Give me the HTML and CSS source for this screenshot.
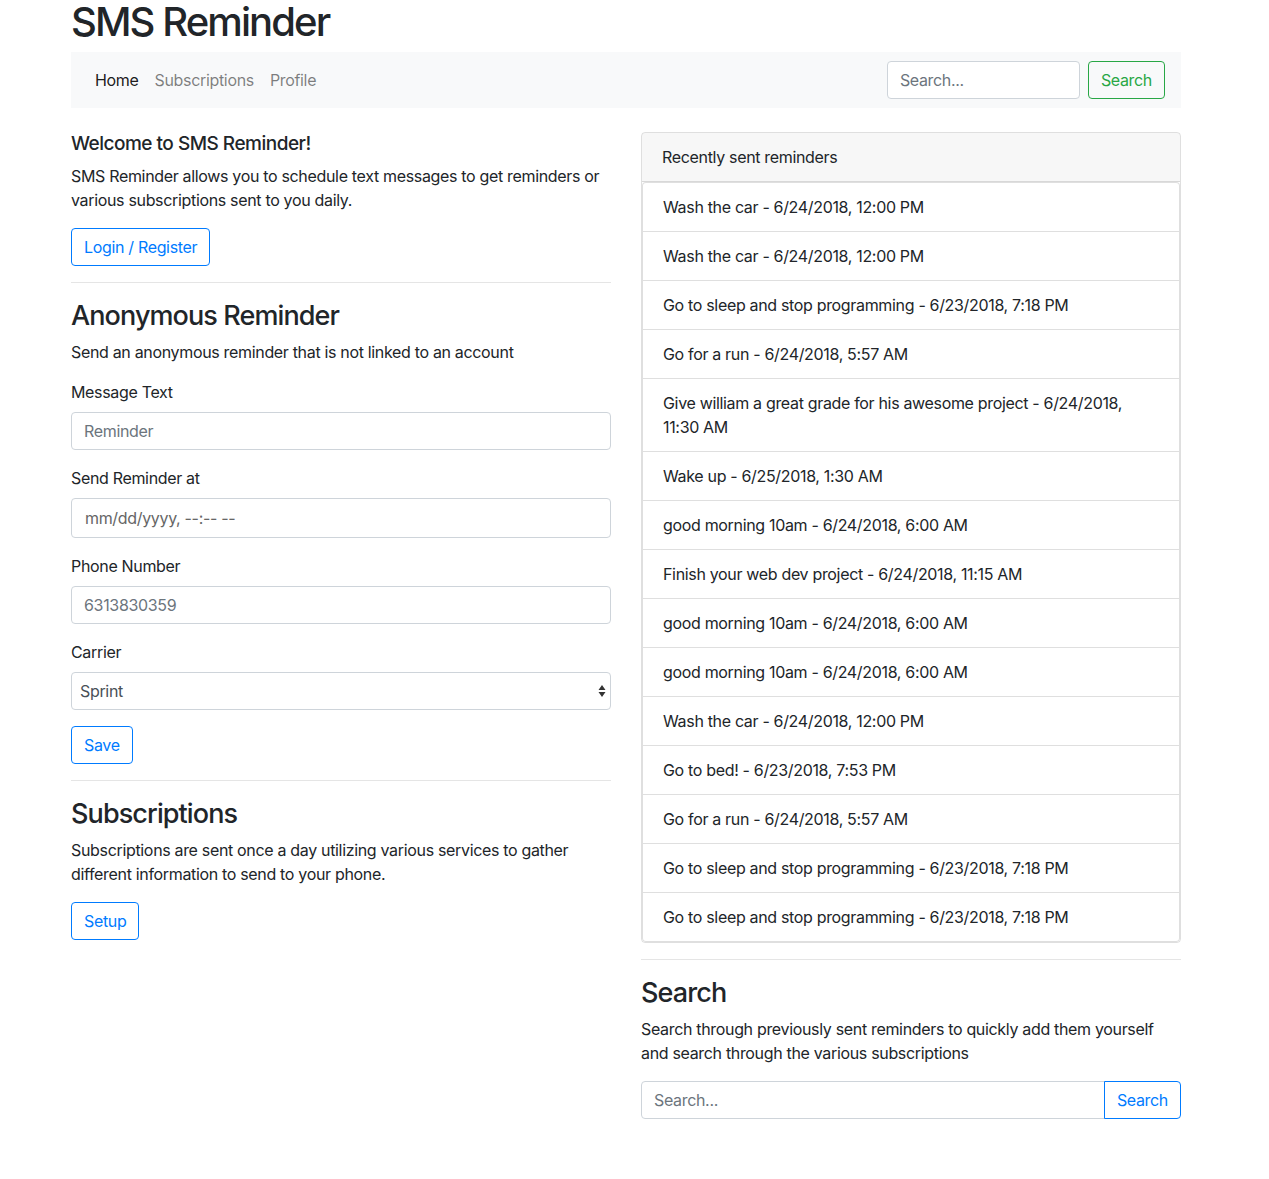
FILE: index.html
```html
<!DOCTYPE html>
<html>
<head>
<meta charset="utf-8">
<title>SMS Reminder</title>
<link rel="stylesheet" href="styles.css">
</head>
<body>
<div class="container">
  <h1 class="title">SMS Reminder</h1>
  <nav class="navbar">
    <ul class="nav">
      <li><a class="nav-link active">Home</a></li>
      <li><a class="nav-link">Subscriptions</a></li>
      <li><a class="nav-link">Profile</a></li>
    </ul>
    <form class="nav-search">
      <input class="form-control nav-input" type="text" placeholder="Search...">
      <button type="button" class="btn btn-success">Search</button>
    </form>
  </nav>

  <div class="row">
    <div class="col">
      <h5 class="h5">Welcome to SMS Reminder!</h5>
      <p>SMS Reminder allows you to schedule text messages to get reminders or various subscriptions sent to you daily.</p>
      <button type="button" class="btn btn-primary">Login / Register</button>
      <hr>
      <h3 class="h3">Anonymous Reminder</h3>
      <p>Send an anonymous reminder that is not linked to an account</p>
      <form>
        <div class="form-group">
          <label>Message Text</label>
          <input class="form-control" type="text" placeholder="Reminder">
        </div>
        <div class="form-group">
          <label>Send Reminder at</label>
          <input class="form-control date" type="text" placeholder="mm/dd/yyyy, --:-- --">
        </div>
        <div class="form-group">
          <label>Phone Number</label>
          <input class="form-control" type="text" placeholder="6313830359">
        </div>
        <div class="form-group">
          <label>Carrier</label>
          <div class="select-wrap">
            <select class="form-control select">
              <option>Sprint</option>
              <option>Verizon</option>
              <option>AT&amp;T</option>
              <option>T-Mobile</option>
            </select>
            <svg class="select-arrow" width="8" height="14" viewBox="0 0 8 14"><path d="M4 1 L7.5 6 L0.5 6 Z M4 13 L7.5 8 L0.5 8 Z" fill="#333"/></svg>
          </div>
        </div>
        <button type="button" class="btn btn-primary">Save</button>
      </form>
      <hr>
      <h3 class="h3">Subscriptions</h3>
      <p>Subscriptions are sent once a day utilizing various services to gather different information to send to your phone.</p>
      <button type="button" class="btn btn-primary">Setup</button>
    </div>

    <div class="col">
      <div class="card">
        <div class="card-header">Recently sent reminders</div>
        <ul class="list-group">
          <li class="list-group-item">Wash the car - 6/24/2018, 12:00 PM</li>
          <li class="list-group-item">Wash the car - 6/24/2018, 12:00 PM</li>
          <li class="list-group-item">Go to sleep and stop programming - 6/23/2018, 7:18 PM</li>
          <li class="list-group-item">Go for a run - 6/24/2018, 5:57 AM</li>
          <li class="list-group-item">Give william a great grade for his awesome project - 6/24/2018, 11:30 AM</li>
          <li class="list-group-item">Wake up - 6/25/2018, 1:30 AM</li>
          <li class="list-group-item">good morning 10am - 6/24/2018, 6:00 AM</li>
          <li class="list-group-item">Finish your web dev project - 6/24/2018, 11:15 AM</li>
          <li class="list-group-item">good morning 10am - 6/24/2018, 6:00 AM</li>
          <li class="list-group-item">good morning 10am - 6/24/2018, 6:00 AM</li>
          <li class="list-group-item">Wash the car - 6/24/2018, 12:00 PM</li>
          <li class="list-group-item">Go to bed! - 6/23/2018, 7:53 PM</li>
          <li class="list-group-item">Go for a run - 6/24/2018, 5:57 AM</li>
          <li class="list-group-item">Go to sleep and stop programming - 6/23/2018, 7:18 PM</li>
          <li class="list-group-item">Go to sleep and stop programming - 6/23/2018, 7:18 PM</li>
        </ul>
      </div>
      <hr>
      <h3 class="h3">Search</h3>
      <p>Search through previously sent reminders to quickly add them yourself and search through the various subscriptions</p>
      <div class="input-group">
        <input class="form-control ig-input" type="text" placeholder="Search...">
        <button type="button" class="btn btn-primary ig-btn">Search</button>
      </div>
    </div>
  </div>
</div>
</body>
</html>
```

FILE: styles.css
```css
* { box-sizing: border-box; }
html, body { margin: 0; padding: 0; }
body {
  font-family: Inter, Roboto, "Helvetica Neue", Arial, sans-serif;
  font-size: 16px;
  line-height: 1.5;
  letter-spacing: -0.33px;
  color: #212529;
  background: #fff;
}
.container {
  width: 1110px;
  margin-left: 71px;
}
.title {
  font-size: 40px;
  font-weight: 500;
  line-height: 44px;
  letter-spacing: -1.9px;
  margin: 0 0 8px;
}
.navbar {
  background: #f8f9fa;
  height: 56px;
  padding: 8px 16px;
  display: flex;
  align-items: center;
  justify-content: space-between;
}
.nav { list-style: none; margin: 0; padding: 0; display: flex; }
.nav-link {
  display: block;
  padding: 8px;
  color: rgba(0,0,0,.5);
}
.nav-link.active { color: rgba(0,0,0,.9); }
.nav-search { display: flex; margin: 0; }
.form-control {
  display: block;
  width: 100%;
  height: 38px;
  padding: 6px 12px;
  font-family: inherit;
  font-size: 16px;
  line-height: 1.5;
  letter-spacing: inherit;
  color: #495057;
  background: #fff;
  border: 1px solid #ced4da;
  border-radius: 4px;
  outline: none;
}
.form-control::placeholder { color: #6c757d; opacity: 1; }
.nav-search .nav-input { width: 193px; margin-right: 8px; }
.form-control.date { height: 40px; padding-left: 13px; }
.form-control.date::placeholder { color: #666; }
.btn {
  display: inline-block;
  height: 38px;
  padding: 6px 12px;
  font-family: inherit;
  font-size: 16px;
  line-height: 1.5;
  letter-spacing: inherit;
  background: transparent;
  border: 1px solid;
  border-radius: 4px;
  cursor: pointer;
}
.btn-primary { color: #007bff; border-color: #007bff; }
.btn-success { color: #28a745; border-color: #28a745; }
.row {
  display: flex;
  gap: 30px;
  margin-top: 24px;
}
.col { flex: 1 1 0; min-width: 0; }
.h5 { font-size: 19px; font-weight: 500; line-height: 24px; margin: 0 0 8px; letter-spacing: -0.5px; }
.h3 { font-size: 27px; font-weight: 500; line-height: 33px; margin: 0 0 8px; letter-spacing: -0.9px; }
p { margin: 0 0 16px; }
hr {
  margin: 16px 0;
  border: 0;
  border-top: 1px solid rgba(0,0,0,.1);
}
label { display: inline-block; margin-bottom: 8px; }
.form-group { margin-bottom: 16px; }
.select-wrap { position: relative; }
.select {
  appearance: none;
  -webkit-appearance: none;
  padding-left: 8px;
}
.select-arrow { position: absolute; right: 5px; top: 12px; pointer-events: none; }
.card {
  border: 1px solid rgba(0,0,0,.125);
  border-radius: 4px;
  overflow: hidden;
}
.card-header {
  padding: 12px 20px;
  background: rgba(0,0,0,.03);
  border-bottom: 1px solid rgba(0,0,0,.125);
}
.list-group { list-style: none; margin: 0; padding: 0; }
.list-group-item {
  padding: 12px 20px;
  border: 1px solid rgba(0,0,0,.125);
  margin-bottom: -1px;
  background: #fff;
}
.list-group-item:first-child { border-radius: 4px 4px 0 0; }
.list-group-item:last-child { margin-bottom: 0; border-radius: 0 0 4px 4px; }
.input-group { display: flex; }
.ig-input { flex: 1 1 auto; border-radius: 4px 0 0 4px; }
.ig-btn { margin-left: -1px; border-radius: 0 4px 4px 0; }
```
